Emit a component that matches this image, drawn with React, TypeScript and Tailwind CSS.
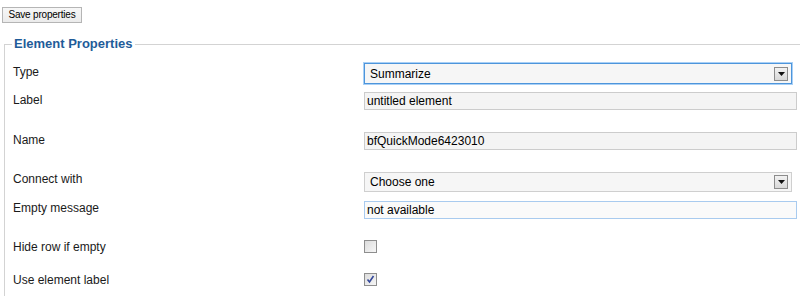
import React from "react";

const font = { fontFamily: '"Liberation Sans", Arial, sans-serif' };

function Row({
  label,
  h,
  pt,
  children,
}: {
  label: string;
  h: string;
  pt: string;
  children: React.ReactNode;
}) {
  return (
    <div className={`flex items-start ${h}`}>
      <div className={`w-[351px] shrink-0 text-[12px] leading-[14px] text-[#1a1a1a] ${pt}`}>{label}</div>
      {children}
    </div>
  );
}

function Select({ value, focused }: { value: string; focused?: boolean }) {
  return (
    <div
      className={
        focused
          ? "flex h-[21px] w-[428px] items-center justify-between border border-[#4d95db] bg-[#f6f6f6] pl-[5px] pr-[3px] shadow-[0_0_0_1px_#a9d0f6]"
          : "flex h-[20px] w-[428px] items-center justify-between border border-[#cfcfcf] bg-[#f6f6f6] pl-[5px] pr-[3px]"
      }
    >
      <span className="text-[12px] leading-[14px] text-black">{value}</span>
      <span className="flex h-[14px] w-[14px] items-center justify-center border border-[#8c8c8c] bg-gradient-to-b from-[#f2f2f2] to-[#d8d8d8]">
        <svg width="7" height="4" viewBox="0 0 7 4">
          <path d="M0 0h7L3.5 4z" fill="#111" />
        </svg>
      </span>
    </div>
  );
}

function Input({ value, active }: { value: string; active?: boolean }) {
  return (
    <div
      className={`flex h-[18px] w-[433px] items-center border pl-[2px] text-[12px] leading-[14px] text-black ${
        active ? "border-[#a9cbef] bg-[#fafafa]" : "border-[#cccccc] bg-[#f4f4f4]"
      }`}
    >
      {value}
    </div>
  );
}

function Checkbox({ checked }: { checked?: boolean }) {
  return (
    <span className="flex h-[13px] w-[13px] items-center justify-center border border-[#8e8e8e] bg-gradient-to-br from-[#dcdcdc] to-[#f6f6f6]">
      {checked && (
        <svg width="9" height="9" viewBox="0 0 9 9">
          <path d="M1.5 4.5L3.5 7L7.5 1" fill="none" stroke="#34489a" strokeWidth="1.6" />
        </svg>
      )}
    </span>
  );
}

export default function App() {
  return (
    <div className="h-[296px] w-[800px] overflow-hidden bg-white" style={font}>
      <div className="flex pl-[2px] pt-[7px]">
        <button className="h-[16px] w-[80px] border border-[#b5b5b5] bg-gradient-to-b from-[#f7f7f7] to-[#ebebeb] text-[10px] leading-[12px] tracking-[-0.2px] text-black">
          Save properties
        </button>
      </div>
      <fieldset className="ml-1 mt-[13px] border-l border-t border-[#d3d3d3] pl-[8px] pt-[11px]">
        <legend className="ml-[-1px] px-[2px] text-[13px] font-bold leading-[16px] text-[#1f5c99]">
          Element Properties
        </legend>
        <Row label="Type" h="h-[29px]" pt="pt-[2px]">
          <Select value="Summarize" focused />
        </Row>
        <Row label="Label" h="h-[40px]" pt="pt-[1px]">
          <Input value="untitled element" />
        </Row>
        <Row label="Name" h="h-[40px]" pt="pt-[1px]">
          <Input value="bfQuickMode6423010" />
        </Row>
        <Row label="Connect with" h="h-[29px]" pt="pt-0">
          <Select value="Choose one" />
        </Row>
        <Row label="Empty message" h="h-[39px]" pt="pt-0">
          <Input value="not available" active />
        </Row>
        <Row label="Hide row if empty" h="h-[33px]" pt="pt-0">
          <Checkbox />
        </Row>
        <Row label="Use element label" h="h-[30px]" pt="pt-0">
          <Checkbox checked />
        </Row>
      </fieldset>
    </div>
  );
}
